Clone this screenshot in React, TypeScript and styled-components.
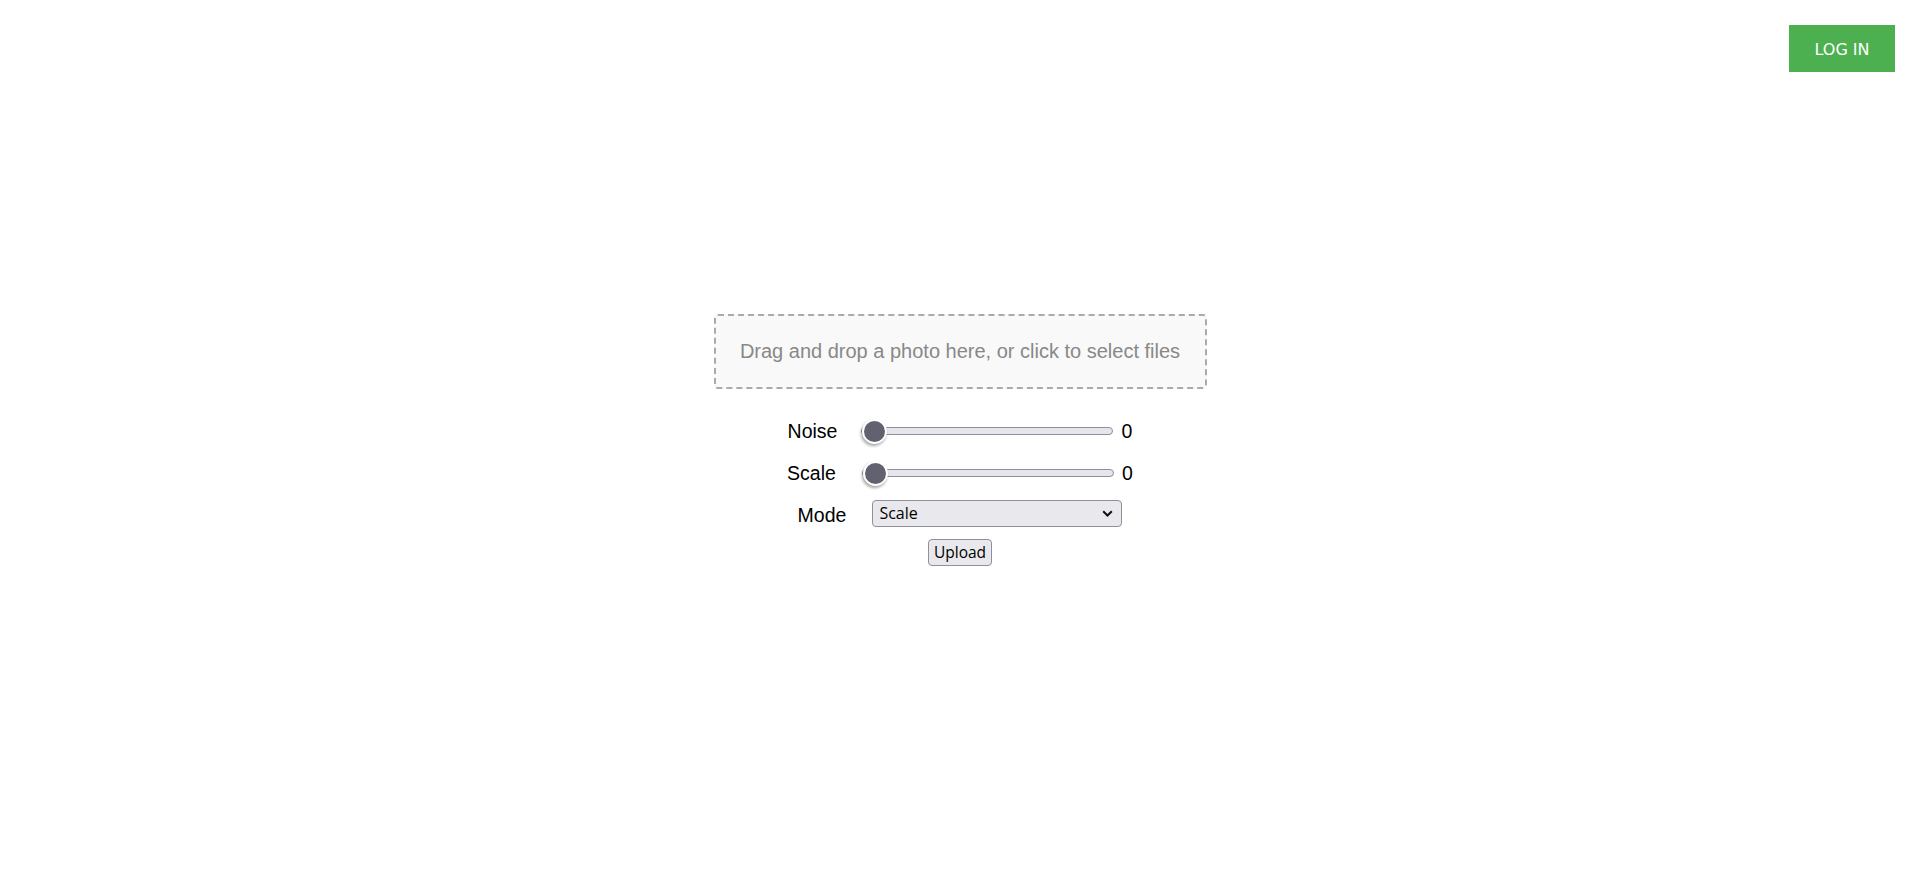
import React, { useState } from "react";
import styled, { createGlobalStyle } from "styled-components";

const GlobalStyle = createGlobalStyle`
  html, body {
    margin: 0;
    padding: 0;
    background: #ffffff;
    font-family: "Liberation Sans", Arial, sans-serif;
  }
  * { box-sizing: border-box; }
`;

const Page = styled.div`
  width: 100%;
  min-height: 878px;
  display: flex;
  flex-direction: column;
`;

const Header = styled.header`
  display: flex;
  justify-content: flex-end;
  padding: 25px 25px 0 0;
`;

const LoginButton = styled.button`
  width: 106px;
  height: 47px;
  border: none;
  background: #4caf50;
  color: #ffffff;
  font-family: "DejaVu Sans", Verdana, sans-serif;
  font-size: 16px;
  padding: 2px 0 0;
  cursor: pointer;
`;

const Main = styled.main`
  display: flex;
  flex-direction: column;
  align-items: center;
  margin-top: 242px;
`;

const DropZone = styled.div`
  border: 2px dashed #aaaaaa;
  border-radius: 4px;
  background: #f9f9f9;
  color: #888888;
  font-size: 20px;
  line-height: 23px;
  padding: 24px 24px;
  cursor: pointer;
  width: 493px;
  text-align: center;
  white-space: nowrap;
`;

const Row = styled.div<{ $mt: number }>`
  display: flex;
  align-items: center;
  justify-content: center;
  height: 28px;
  margin-top: ${(p) => p.$mt}px;
`;

const Label = styled.label<{ $gap: number; $drop?: number }>`
  font-size: 19.5px;
  color: #000;
  margin-right: ${(p) => p.$gap}px;
  padding-top: ${(p) => p.$drop ?? 0}px;
`;

const Range = styled.input`
  -webkit-appearance: none;
  appearance: none;
  width: 252px;
  height: 28px;
  margin: 0;
  background: transparent;

  &::-webkit-slider-runnable-track {
    height: 8px;
    background: #e6e5eb;
    border: 1px solid #8f8f9d;
    border-radius: 4px;
  }
  &::-webkit-slider-thumb {
    -webkit-appearance: none;
    appearance: none;
    box-sizing: border-box;
    width: 25px;
    height: 25px;
    margin-top: -9.5px;
    border-radius: 50%;
    background: #62616f;
    border: 2px solid #ffffff;
    box-shadow: -1px 2px 3px rgba(0, 0, 0, 0.35);
  }
`;

const Value = styled.span`
  font-size: 19.5px;
  color: #000;
  margin-left: 8px;
  width: 11px;
`;

const SelectWrap = styled.div`
  position: relative;
  width: 250px;
  height: 27px;
  display: flex;
`;

const Select = styled.select`
  -webkit-appearance: none;
  appearance: none;
  width: 100%;
  height: 27px;
  margin: 0;
  padding: 0 24px 0 6px;
  background: #e9e9ed;
  border: 1px solid #8f8f9d;
  border-radius: 4px;
  color: #000;
  font-family: "Open Sans", "Noto Sans", sans-serif;
  font-size: 16px;
`;

const Chevron = styled.svg`
  position: absolute;
  right: 9px;
  top: 10px;
  pointer-events: none;
`;

const UploadButton = styled.button`
  height: 27px;
  width: 64px;
  padding: 0;
  background: #e9e9ed;
  border: 1px solid #8f8f9d;
  border-radius: 4px;
  color: #000;
  font-family: "Open Sans", "Noto Sans", sans-serif;
  font-size: 15.5px;
  cursor: pointer;
`;

export default function App() {
  const [noise, setNoise] = useState(0);
  const [scale, setScale] = useState(0);
  const [mode, setMode] = useState("scale");

  return (
    <>
      <GlobalStyle />
      <Page>
        <Header>
          <LoginButton>LOG IN</LoginButton>
        </Header>
        <Main>
          <DropZone>Drag and drop a photo here, or click to select files</DropZone>
          <Row $mt={28}>
            <Label $gap={24}>Noise</Label>
            <Range
              type="range"
              min={0}
              max={3}
              value={noise}
              onChange={(e) => setNoise(Number(e.target.value))}
            />
            <Value>{noise}</Value>
          </Row>
          <Row $mt={14}>
            <Label $gap={26}>Scale</Label>
            <Range
              type="range"
              min={0}
              max={2}
              value={scale}
              onChange={(e) => setScale(Number(e.target.value))}
            />
            <Value>{scale}</Value>
          </Row>
          <Row $mt={12}>
            <Label $gap={26} $drop={5}>Mode</Label>
            <SelectWrap>
              <Select value={mode} onChange={(e) => setMode(e.target.value)}>
                <option value="scale">Scale</option>
                <option value="noise">Noise</option>
                <option value="noise_scale">Noise + Scale</option>
              </Select>
              <Chevron width="11" height="7" viewBox="0 0 11 7">
                <path d="M1.2 1.2 L5.5 5.5 L9.8 1.2" fill="none" stroke="#111" strokeWidth="2" />
              </Chevron>
            </SelectWrap>
          </Row>
          <Row $mt={11}>
            <UploadButton>Upload</UploadButton>
          </Row>
        </Main>
      </Page>
    </>
  );
}
